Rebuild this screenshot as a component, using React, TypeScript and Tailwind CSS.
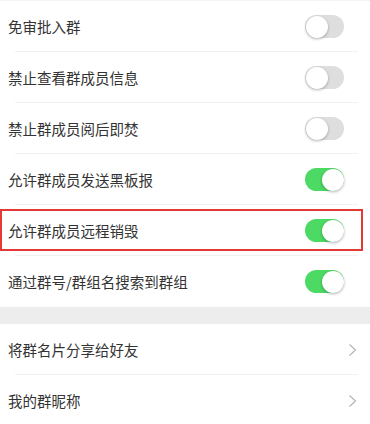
const font = { fontFamily: '"Noto Sans CJK SC", "Noto Sans", sans-serif' }

function Toggle({ on }: { on: boolean }) {
    return (
        <div
            className={`relative h-[23px] w-[39px] shrink-0 rounded-full ${on ? 'bg-[#4cd964]' : 'bg-[#dedede]'}`}
        >
            <div
                className={`absolute top-[0.5px] h-[22px] w-[22px] rounded-full bg-white shadow-[0_1px_3px_rgba(0,0,0,0.3)] ${on ? 'right-[0.5px]' : 'left-[0.5px]'}`}
            />
        </div>
    )
}

function Chevron() {
    return (
        <svg width="9" height="14" viewBox="0 0 9 14" className="mr-[1px] shrink-0">
            <path d="M1.5 1.5 L7.5 7 L1.5 12.5" fill="none" stroke="#b5b5b5" strokeWidth="1.2" />
        </svg>
    )
}

function Row({ label, children, last }: { label: string; children: React.ReactNode; last?: boolean }) {
    return (
        <div className="relative flex h-[51px] items-center justify-between pl-2 pr-[26px]">
            <span className="text-[14.5px] text-[#333]" style={font}>
                {label}
            </span>
            {children}
            {!last && <div className="absolute bottom-0 left-[15px] right-[12px] h-px bg-[#f1f1f1]" />}
        </div>
    )
}

export default function App() {
    const toggles: [string, boolean][] = [
        ['免审批入群', false],
        ['禁止查看群成员信息', false],
        ['禁止群成员阅后即焚', false],
        ['允许群成员发送黑板报', true],
        ['允许群成员远程销毁', true],
        ['通过群号/群组名搜索到群组', true],
    ]
    return (
        <div className="h-[424px] w-[370px] overflow-hidden bg-white">
            <div className="border-t border-[#f4f4f4]">
                {toggles.map(([label, on], i) => (
                    <div key={label} className={i === 4 ? 'relative' : ''}>
                        <Row label={label} last={i === 5}>
                            <Toggle on={on} />
                        </Row>
                        {i === 4 && (
                            <div className="pointer-events-none absolute left-0 right-[7px] top-[4px] bottom-[5px] border-2 border-[#e53935]" />
                        )}
                    </div>
                ))}
            </div>
            <div className="h-[17px] bg-[#ededed]" />
            <div>
                <Row label="将群名片分享给好友">
                    <div className="-mr-[14px]">
                        <Chevron />
                    </div>
                </Row>
                <Row label="我的群昵称" last>
                    <div className="-mr-[14px]">
                        <Chevron />
                    </div>
                </Row>
            </div>
        </div>
    )
}
